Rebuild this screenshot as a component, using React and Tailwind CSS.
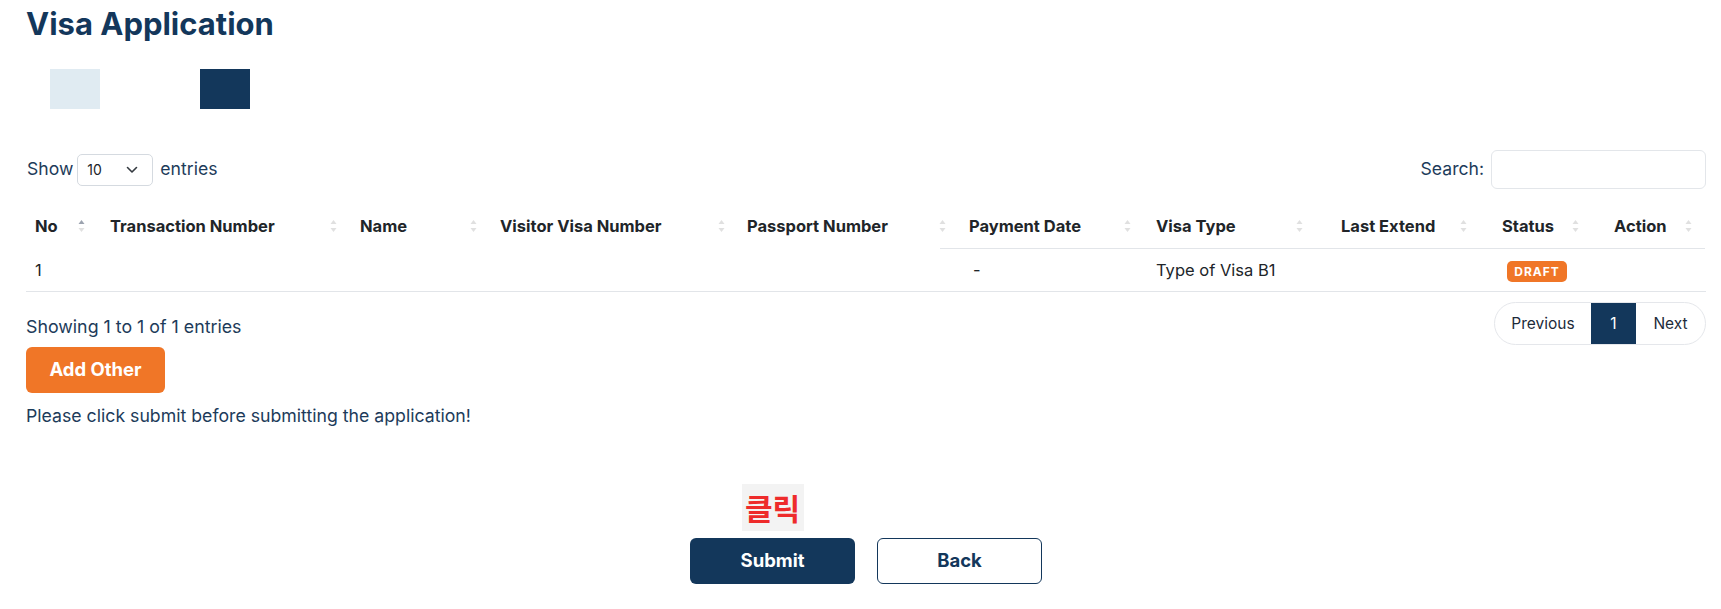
import React from 'react';

// two stacked triangles, like the DataTables sort indicator
const SortIcon = ({ active, className = '' }) => (
  <svg
    width="7"
    height="14"
    viewBox="0 0 7 14"
    className={`absolute top-1/2 -translate-y-1/2 ${className}`}
  >
    <path d="M3.5 1 L6.5 5 L0.5 5 Z" fill={active ? '#9ca3af' : '#e0e0e0'} />
    <path d="M3.5 13 L6.5 9 L0.5 9 Z" fill="#e0e0e0" />
  </svg>
);

const columns = [
  { label: 'No', pad: 'pl-[9px]', icon: 'right-[7px]', active: true },
  { label: 'Transaction Number', pad: 'pl-[18px]', icon: 'right-[7px]' },
  { label: 'Name', pad: 'pl-[16px]', icon: 'right-[7px]' },
  { label: 'Visitor Visa Number', pad: 'pl-[16px]', icon: 'right-[7px]' },
  { label: 'Passport Number', pad: 'pl-[15px]', icon: 'right-[-6px]' },
  { label: 'Payment Date', pad: 'pl-[29px]', icon: 'right-[7px]', line: true },
  { label: 'Visa Type', pad: 'pl-[18px]', icon: 'right-[7px]', line: true },
  { label: 'Last Extend', pad: 'pl-[31px]', icon: 'right-[7px]', line: true },
  { label: 'Status', pad: 'pl-[28px]', icon: 'right-[7px]', line: true },
  { label: 'Action', pad: 'pl-[28px]', icon: 'right-[13px]', line: true },
];

const gridCols =
  'grid grid-cols-[66px_252px_140px_248px_208px_198px_172px_164px_112px_119px]';

export default function App() {
  return (
    <div
      className="min-h-screen w-full bg-white pl-[26px] pr-[15px] text-[17.6px]"
      style={{ fontFamily: 'Inter, "Noto Sans", "Noto Sans CJK KR", sans-serif' }}
    >
      {/* Title */}
      <h1 className="pt-[5px] text-[31px] font-bold leading-[38px] text-[#13375b]">
        Visa Application
      </h1>

      {/* Step blocks */}
      <div className="mt-[26px] flex gap-[100px] pl-[24px]">
        <div className="h-[40px] w-[50px] bg-[#e0ebf2]" />
        <div className="h-[40px] w-[50px] bg-[#13375b]" />
      </div>

      {/* Length + search */}
      <div className="mt-[41px] flex items-center justify-between text-[#1d3b5a]">
        <div className="flex items-center">
          <span className="pl-[1px]">Show</span>
          <div className="ml-[4px] flex h-[32px] w-[76px] items-center justify-between rounded-[5px] border border-[#d5dae0] pl-[9px] pr-[14px] text-[14px] text-[#212529]">
            <span>10</span>
            <svg width="12" height="8" viewBox="0 0 12 8" fill="none">
              <path d="M1.5 1.5 L6 6 L10.5 1.5" stroke="#343a40" strokeWidth="1.6" strokeLinecap="round" strokeLinejoin="round" />
            </svg>
          </div>
          <span className="ml-[7px]">entries</span>
        </div>
        <div className="flex items-center">
          <span>Search:</span>
          <div className="ml-[7px] h-[39px] w-[215px] rounded-[6px] border border-[#e3e6ea]" />
        </div>
      </div>

      {/* Table header */}
      <div className={`mt-[15px] ${gridCols} text-[16.5px] font-bold text-[#212529]`}>
        {columns.map((c) => (
          <div
            key={c.label}
            className={`relative py-[10px] leading-6 ${c.pad} ${c.line ? 'border-b border-[#e2e5e9]' : 'border-b border-transparent'}`}
          >
            {c.label}
            <SortIcon active={c.active} className={c.icon} />
          </div>
        ))}
      </div>

      {/* Data row */}
      <div className={`${gridCols} h-[43px] items-center border-b border-[#e2e5e9] text-[16.5px] text-[#212529]`}>
        <div className="pl-[9px]">1</div>
        <div />
        <div />
        <div />
        <div />
        <div className="pl-[33px]">-</div>
        <div className="pl-[18px]">Type of Visa B1</div>
        <div />
        <div className="pl-[33px]">
          <span className="inline-flex h-[21px] w-[60px] items-center justify-center rounded-[5px] bg-[#f07627] text-[12px] font-bold tracking-[1px] text-white">
            DRAFT
          </span>
        </div>
        <div />
      </div>

      {/* Info + pagination */}
      <div className="mt-[10px] flex items-start justify-between">
        <span className="pt-[12px] text-[17.8px] leading-[26px] text-[#1d3b5a]">Showing 1 to 1 of 1 entries</span>
        <div className="flex h-[43px] overflow-hidden rounded-full border border-[#e5e7eb] text-[15.5px] text-[#1d2b3a]">
          <span className="flex w-[96px] items-center justify-center">Previous</span>
          <span className="flex w-[45px] items-center justify-center bg-[#13375b] text-white">1</span>
          <span className="flex w-[69px] items-center justify-center">Next</span>
        </div>
      </div>

      <button className="mt-[2px] flex h-[46px] w-[139px] items-center justify-center rounded-[6px] bg-[#f07627] text-[18.5px] font-bold text-white">
        Add Other
      </button>

      <p className="mt-[10px] text-[17.7px] leading-[26px] text-[#1d3b5a]">
        Please click submit before submitting the application!
      </p>

      {/* Submit / Back */}
      <div className="mt-[55px] flex items-end justify-center gap-[22px]">
        <div className="flex flex-col items-center">
          <span
            className="mb-[7px] flex h-[47px] w-[62px] items-center justify-center bg-[#f3f3f3] text-[30px] font-bold text-[#ee2b2b]"
            style={{ fontFamily: '"Noto Sans CJK KR", sans-serif' }}
          >
            클릭
          </span>
          <button className="flex h-[46px] w-[165px] items-center justify-center rounded-[6px] bg-[#13375b] text-[18.5px] font-bold text-white">
            Submit
          </button>
        </div>
        <button className="flex h-[46px] w-[165px] items-center justify-center rounded-[6px] border border-[#13375b] bg-white text-[18.5px] font-bold text-[#13375b]">
          Back
        </button>
      </div>
    </div>
  );
}
